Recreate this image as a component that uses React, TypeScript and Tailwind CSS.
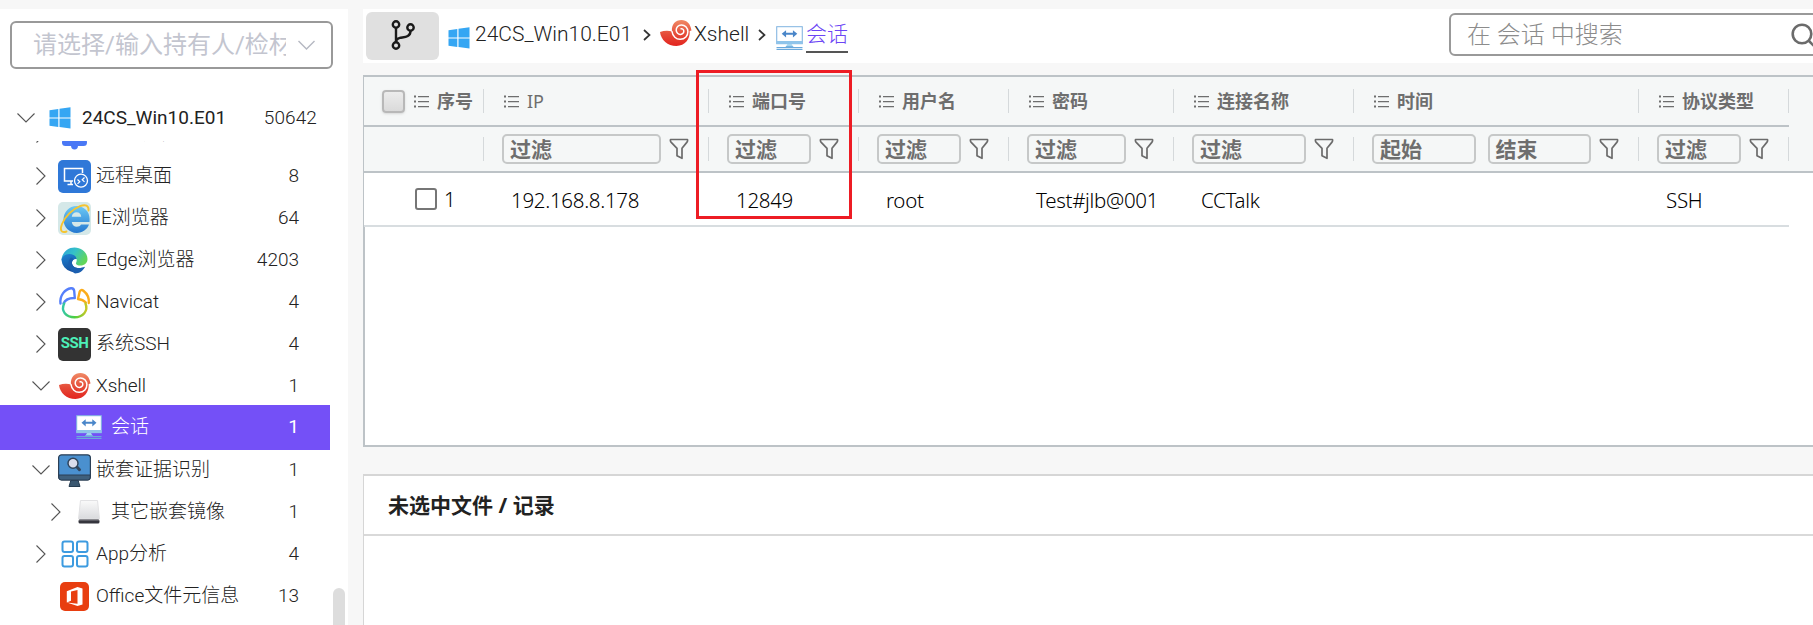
import React from "react";

const UI = "font-['Roboto','Noto_Sans_CJK_SC',sans-serif]";
const GRID = "font-['Noto_Sans','Noto_Sans_CJK_SC',sans-serif]";

function WindowsLogo() {
  return (
    <svg width="22" height="22" viewBox="0 0 22 22" className="shrink-0" fill="#35a6f3">
      <path d="M.5 3.3 9.3 2v8.4H.5zM10.5 1.8 21.5.3v10.1h-11zM.5 11.6h8.8V20L.5 18.7zM10.5 11.6h11v10L10.5 20.1z" />
    </svg>
  );
}

function SessionIcon({ size = 26 }: { size?: number }) {
  return (
    <svg width={size} height="25" viewBox="0 0 26 25" preserveAspectRatio="none" className="shrink-0">
      <rect x=".7" y=".7" width="24.6" height="17" fill="#fff" stroke="#7fb3e0" />
      <rect x=".5" y="15" width="25" height="3" fill="#8fc4ea" />
      <path d="M11 18h4l2 3.5H9z" fill="#a5d5f0" />
      <path d="M.5 21h8.500l1-.8h6l1 .8h8.500v1.200H.5zM.5 22.900h25v1.100H.5z" fill="#6aa9dc" />
      <path d="M5.500 7.800l4.200-3.600v2.600h6.600V4.200l4.200 3.600-4.200 3.600V8.800H9.700v2.600z" fill="#4a86c9" />
    </svg>
  );
}

function ShellIcon() {
  return (
    <svg width="33" height="28" viewBox="0 0 33 28" className="shrink-0">
      <defs>
        <linearGradient id="shell" x1="0" y1="0" x2="0" y2="1">
          <stop offset="0" stopColor="#f08a66" />
          <stop offset=".55" stopColor="#e54b38" />
          <stop offset="1" stopColor="#e3241f" />
        </linearGradient>
      </defs>
      <path
        d="M1 13c4-1.500 8.500-1.500 12-.6C12.200 5.500 16.500 1 22.500 1c5.200 0 9 3.500 10 10.500l-1.800.6c.6 8-4.700 14.900-13.200 14.900C8.500 27 2 21 1 13z"
        fill="url(#shell)"
      />
      <path
        d="M13 12.500c.6 4.700 4.200 8 8.300 7.800 4.600-.2 7.700-3.600 7.600-7.800-.1-3.900-3-6.700-6.500-6.600-3.100.1-5.300 2.400-5.200 5.200.1 2.600 2 4.500 4.400 4.300 2-.1 3.400-1.600 3.200-3.400-.1-1.500-1.300-2.500-2.700-2.200"
        fill="none"
        stroke="#fff"
        strokeWidth="1.500"
        strokeLinecap="round"
      />
    </svg>
  );
}

function RemoteIcon() {
  return (
    <svg width="33" height="33" viewBox="0 0 33 33">
      <rect width="33" height="33" rx="5" fill="#2f78d8" />
      <path d="M15 21H6.500V8.500h18V13M13 21v3.500M9.500 24.500H15" fill="none" stroke="#fff" strokeWidth="1.500" />
      <circle cx="23" cy="20.700" r="6.500" fill="#2f78d8" stroke="#fff" strokeWidth="1.300" />
      <path d="M19.500 19.500l2.300 2.200-2.300 2.200M26.500 17.500l-2.300 2.200 2.300 2.200" fill="none" stroke="#fff" strokeWidth="1.200" />
    </svg>
  );
}

function IEIcon() {
  return (
    <svg width="33" height="33" viewBox="0 0 33 33">
      <defs>
        <linearGradient id="ie" x1="0" y1="0" x2="0" y2="1">
          <stop offset="0" stopColor="#6cc9f5" />
          <stop offset="1" stopColor="#2478d0" />
        </linearGradient>
      </defs>
      <rect width="33" height="33" rx="5" fill="#d5e8e8" />
      <path
        d="M31.500 20H13.800c.3 3 2.400 4.800 5 4.800 2 0 3.400-.8 4.200-2.200h8c-1.800 5-6.500 8.400-12.200 8.400C11.200 31 5.500 25 5.500 17.600S11.200 4 18.600 4s13 5.500 13 13zM13.800 14.700h9.400c-.2-2.600-2-4.400-4.600-4.400s-4.500 1.800-4.800 4.400z"
        fill="url(#ie)"
      />
      <path
        d="M30.500 8.500C31 3.500 27.500 2 22 4.200 14.500 7.200 7 14.500 4 22c-2.300 5.800-1 9.500 4.500 7.500"
        fill="none"
        stroke="#f5c431"
        strokeWidth="1.900"
        strokeLinecap="round"
      />
    </svg>
  );
}

function EdgeIcon() {
  return (
    <svg width="27" height="27" viewBox="0 0 27 27">
      <defs>
        <linearGradient id="edgeTop" x1="0" y1="0" x2="1" y2=".5">
          <stop offset="0" stopColor="#2a9fdc" />
          <stop offset=".5" stopColor="#35c1c8" />
          <stop offset="1" stopColor="#62d65a" />
        </linearGradient>
        <linearGradient id="edgeLow" x1="0" y1="0" x2=".4" y2="1">
          <stop offset="0" stopColor="#1d84d4" />
          <stop offset="1" stopColor="#164e9c" />
        </linearGradient>
      </defs>
      <path d="M.5 13C1 5.500 6.800.5 13.500.5 21 .5 26.500 6 26.500 12c0 4-3 6.500-7 6.500-3 0-5-1-4.500-2.500.5-1.200 1-2.200.5-4z" fill="url(#edgeTop)" />
      <path d="M.5 13C1.500 7.500 8 5.500 12.500 8c2 1 3 2.500 3 4-2.500-.5-5 1.500-4.500 4.500.8 4.500 7 6 13 3.200A13 13 0 0 1 .5 13z" fill="url(#edgeLow)" />
      <path d="M9.500 11C6 15 7 23 14 26.400c4.500 0 8-2.400 10-6.700-6 2.800-12.200 1.300-13-3.200-.2-2 .5-3.300 1.700-4.100-.9-1.300-2-1.900-3.200-1.400z" fill="#1b5fb0" />
    </svg>
  );
}

function NavicatIcon() {
  return (
    <svg width="33" height="33" viewBox="0 0 33 33" fill="none" strokeWidth="2.400" strokeLinecap="round" strokeLinejoin="round">
      <defs>
        <linearGradient id="naviBody" x1="0" y1="0" x2="1" y2="0">
          <stop offset="0" stopColor="#35c7a5" />
          <stop offset=".5" stopColor="#4ccf3e" />
          <stop offset="1" stopColor="#c8c725" />
        </linearGradient>
      </defs>
      <path d="M2.500 17.500C1.500 9.500 7 3 13 2.200c2-.2 3 1 3.200 2.800l.6 7c-5.500-.2-9.500 1.500-11.300 5.500" stroke="#557ffb" />
      <path d="M20 13l1.600-7.100c.5-2 2.300-2.400 3.800-1.200 4 3.100 5.800 8 5.400 12.300M20 13c3.200.3 5.800 1.300 7.800 3.500" stroke="#fbac1b" />
      <path d="M6.200 17.500C2.500 25 8 31.200 16.500 31.200S30.500 25 27.500 17.500" stroke="url(#naviBody)" />
    </svg>
  );
}

function SshIcon() {
  return (
    <span className="flex h-[33px] w-[33px] justify-center rounded-[5px] bg-[#333] pt-[6px] text-[15px] leading-[18px] font-bold tracking-[-0.6px] text-[#4df0b8]">
      SSH
    </span>
  );
}

function EvidenceIcon() {
  return (
    <svg width="33" height="33" viewBox="0 0 33 33">
      <path d="M13 26h7l2 6.500H11z" fill="#3a5770" stroke="#253b50" />
      <rect x=".6" y=".8" width="31.800" height="25" rx="3" fill="#4a90cf" stroke="#2b3f55" strokeWidth="1.200" />
      <path d="M.8 21h31.400v2.500a2.500 2.500 0 0 1-2.500 2.500H3.300a2.500 2.500 0 0 1-2.500-2.500z" fill="#3f607c" stroke="#2b3f55" />
      <path d="M18.500 12.500l3 3.200" stroke="#31455c" strokeWidth="3" strokeLinecap="round" />
      <circle cx="15" cy="9.300" r="5" fill="#d9dcec" stroke="#31455c" strokeWidth="1.500" />
    </svg>
  );
}

function DiskIcon() {
  return (
    <svg width="22" height="24" viewBox="0 0 22 24">
      <defs>
        <linearGradient id="disk" x1="0" y1="0" x2="0" y2="1">
          <stop offset="0" stopColor="#fafafa" />
          <stop offset="1" stopColor="#d9dadd" />
        </linearGradient>
      </defs>
      <path d="M2.500.5h17l2 18.500H.5z" fill="url(#disk)" stroke="#e2e2e4" />
      <rect x=".5" y="19.500" width="21" height="4" rx="1.500" fill="#35353d" />
      <path d="M1 20h20" stroke="#85858b" />
    </svg>
  );
}

function AppsIcon() {
  return (
    <svg width="28" height="28" viewBox="0 0 28 28" fill="none" stroke="#3d9be0" strokeWidth="2">
      <rect x="1.500" y="1.500" width="10.500" height="10.500" rx="2" />
      <rect x="16" y="1.500" width="10.500" height="10.500" rx="2" />
      <rect x="1.500" y="16" width="10.500" height="10.500" rx="2" />
      <rect x="16" y="16" width="10.500" height="10.500" rx="2" />
    </svg>
  );
}

function OfficeIcon() {
  return (
    <svg width="29" height="29" viewBox="0 0 29 29">
      <rect width="29" height="29" rx="5" fill="#e83e10" />
      <path d="M6.800 9.200L17.500 5l5 1.500v16l-5 1.500-10.700-3.500 10.700 1.200V8l-6.500 1.600v9.200l-4.200 1.700z" fill="#fff" />
    </svg>
  );
}

function BellIcon() {
  return (
    <svg width="25" height="31" viewBox="0 0 25 31" fill="#4a78f5">
      <path d="M4 16V9a8.500 8 0 0 1 17 0v7l4 5H0z" />
      <rect y="20" width="25" height="7" rx="3.500" />
      <path d="M9 26.500h7a3.500 4 0 0 1-7 0z" />
    </svg>
  );
}

function Chevron({ open }: { open?: boolean }) {
  return (
    <svg width="18" height="18" viewBox="0 0 18 18" className="shrink-0" fill="none" stroke="#555" strokeWidth="1.100">
      <path d={open ? "M.5 4.500 9 13l8.500-8.500" : "M4.500.500 13 9l-8.500 8.500"} />
    </svg>
  );
}

type Node = {
  label: string;
  count: string;
  icon: React.ReactNode;
  level?: 1 | 2;
  state?: "open" | "closed";
  selected?: boolean;
};

const nodes: Node[] = [
  { label: "Toast通知", count: "", icon: <BellIcon />, state: "closed" },
  { label: "远程桌面", count: "8", icon: <RemoteIcon />, state: "closed" },
  { label: "IE浏览器", count: "64", icon: <IEIcon />, state: "closed" },
  { label: "Edge浏览器", count: "4203", icon: <EdgeIcon />, state: "closed" },
  { label: "Navicat", count: "4", icon: <NavicatIcon />, state: "closed" },
  { label: "系统SSH", count: "4", icon: <SshIcon />, state: "closed" },
  { label: "Xshell", count: "1", icon: <ShellIcon />, state: "open" },
  { label: "会话", count: "1", icon: <SessionIcon />, level: 2, selected: true },
  { label: "嵌套证据识别", count: "1", icon: <EvidenceIcon />, state: "open" },
  { label: "其它嵌套镜像", count: "1", icon: <DiskIcon />, level: 2, state: "closed" },
  { label: "App分析", count: "4", icon: <AppsIcon />, state: "closed" },
  { label: "Office文件元信息", count: "13", icon: <OfficeIcon /> },
];

function TreeRow({ node }: { node: Node }) {
  const tone = node.selected ? "-mt-[2px] -mb-[1px] h-[45px] bg-[#7450f7] text-white" : "h-[42px] text-[#222]";
  const indent = node.level === 2 ? "pl-[47px]" : "pl-[32px]";
  return (
    <div className={`flex w-[330px] shrink-0 items-center pr-[31px] text-[19px] ${indent} ${tone}`}>
      <span className="flex w-[18px] shrink-0">{node.state && <Chevron open={node.state === "open"} />}</span>
      <span className={`flex shrink-0 justify-center ${node.level === 2 ? "mr-[4px] ml-[6px] w-[36px]" : "mr-[5px] ml-[8px] w-[33px]"}`}>
        {node.icon}
      </span>
      <span className="grow font-light whitespace-nowrap">{node.label}</span>
      <span className={node.selected ? "" : "font-light"}>{node.count}</span>
    </div>
  );
}

function Sidebar() {
  return (
    <aside className={`flex w-[348px] shrink-0 flex-col bg-white ${UI}`}>
      <div className="mt-[12px] ml-[10px] flex h-[48px] w-[323px] shrink-0 items-center rounded-[6px] border-2 border-[#999] pl-[21px]">
        <span className="w-[253px] overflow-hidden text-[24px] whitespace-nowrap text-[#c3c5cf]">请选择/输入持有人/检材</span>
        <svg width="17" height="10" viewBox="0 0 17 10" className="ml-[12px]" fill="none" stroke="#b5b8c2" strokeWidth="1.400">
          <path d="M.5 1 8.500 9l8-8" />
        </svg>
      </div>
      <div className="mt-[26px] flex h-[46px] shrink-0 items-center pr-[31px] pl-[17px] text-[19px] text-[#222]">
        <Chevron open />
        <span className="mr-[11px] ml-[14px] flex">
          <WindowsLogo />
        </span>
        <span className="grow">24CS_Win10.E01</span>
        <span className="mt-px font-light tracking-[0.1px]">50642</span>
      </div>
      <div className="flex min-h-0 grow justify-between overflow-hidden">
        <div className="-mt-[28px] flex flex-col">
          {nodes.map((n) => (
            <TreeRow key={n.label} node={n} />
          ))}
        </div>
        <div className="mt-[447px] mr-[3px] h-[60px] w-[12px] rounded-full bg-[#ddd]" />
      </div>
    </aside>
  );
}

function CrumbArrow({ className }: { className: string }) {
  return (
    <svg width="8" height="12" viewBox="0 0 8 12" className={`shrink-0 ${className}`} fill="none" stroke="#333" strokeWidth="1.700">
      <path d="M1 1l5.500 5L1 11" />
    </svg>
  );
}

function TopBar() {
  return (
    <header className={`flex h-[54px] shrink-0 items-center bg-white pl-[3px] ${UI}`}>
      <button className="flex h-[48px] w-[73px] shrink-0 items-center justify-center rounded-[6px] bg-[#e0e0e0]">
        <svg width="26" height="32" viewBox="0 0 26 32" className="-mt-[2px]" fill="none" stroke="#1a1a1a" strokeWidth="2.400">
          <circle cx="6" cy="5.500" r="3.200" />
          <circle cx="20.500" cy="8.500" r="3.200" />
          <circle cx="6" cy="26.500" r="3.200" />
          <path d="M6 9v14M20.500 12c0 6.500-6.500 6-10.500 6.800-2.500.6-4 2-4 4.200" />
        </svg>
      </button>
      <div className="-mt-[2px] flex grow items-center text-[21px] text-[#222]">
        <span className="mt-[5px] mr-[5px] ml-[9px] flex">
          <WindowsLogo />
        </span>
        <span className="w-[158px] font-light whitespace-nowrap">24CS_Win10.E01</span>
        <CrumbArrow className="mr-[8px] ml-[10px]" />
        <span className="-mt-[5px] flex">
          <ShellIcon />
        </span>
        <span className="ml-[2px] w-[56px] font-light">Xshell</span>
        <CrumbArrow className="mr-[10px] ml-[8px]" />
        <span className="mt-[6px] flex">
          <SessionIcon size={27} />
        </span>
        <span className="mt-[2px] ml-[3px] flex h-[34px] items-center border-b-2 border-[#555] text-[21px] font-light text-[#6c45f5]">会话</span>
      </div>
      <div className="-mt-[3px] -mr-[20px] flex h-[43px] w-[384px] shrink-0 items-center rounded-[6px] border-2 border-[#999] pl-[16px]">
        <span className="grow text-[24px] font-light text-[#8c8c8c]">在 会话 中搜索</span>
        <svg width="28" height="28" viewBox="0 0 28 28" className="mt-[3px] mr-[13px]" fill="none" stroke="#6b6b6b" strokeWidth="2.600">
          <circle cx="12" cy="12" r="9.300" />
          <path d="M18.500 18.500l8 8" />
        </svg>
      </div>
    </header>
  );
}

function ListIcon() {
  return (
    <svg width="15" height="13" viewBox="0 0 15 13" className="shrink-0" fill="#6e6e6e">
      <path d="M0 .5h2v2H0zM4 1h11v1.200H4zM0 5.500h2v2H0zM4 6h11v1.200H4zM0 10.500h2v2H0zM4 11h11v1.200H4z" />
    </svg>
  );
}

function Funnel() {
  return (
    <svg width="20" height="22" viewBox="0 0 20 22" className="shrink-0" fill="none" stroke="#6b6b6b" strokeWidth="1.700" strokeLinejoin="round">
      <path d="M1.500 1.500h17c.4 1.200.2 1.800-.5 2.600l-5 6.200v10l-5-2.500v-7.500L2 4.100c-.7-.8-.9-1.400-.5-2.600z" />
    </svg>
  );
}

type Column = { title: string; width: string; filters: string[]; value: string };

const columns: Column[] = [
  { title: "IP", width: "w-[225px]", filters: ["过滤"], value: "192.168.8.178" },
  { title: "端口号", width: "w-[150px]", filters: ["过滤"], value: "12849" },
  { title: "用户名", width: "w-[150px]", filters: ["过滤"], value: "root" },
  { title: "密码", width: "w-[165px]", filters: ["过滤"], value: "Test#jlb@001" },
  { title: "连接名称", width: "w-[180px]", filters: ["过滤"], value: "CCTalk" },
  { title: "时间", width: "w-[285px]", filters: ["起始", "结束"], value: "" },
  { title: "协议类型", width: "w-[150px]", filters: ["过滤"], value: "SSH" },
];

function Separator() {
  return <span className="h-[24px] w-px shrink-0 bg-[#d5d9db]" />;
}

function DataGrid() {
  return (
    <section className={`flex h-[372px] shrink-0 flex-col border-y-2 border-l border-[#bdc3c7] bg-white ${GRID}`}>
      <div className="border-b-2 border-[#bdc3c7] bg-[#f5f7f7]">
        <div className="flex h-[50px] w-[1425px] items-center border-b-2 border-[#bdc3c7] text-[18px] font-bold text-[#6e6e6e]">
          <div className="flex w-[120px] shrink-0 items-center pl-[18px]">
            <span className="h-[23px] w-[23px] shrink-0 rounded-[4px] border-2 border-[#b8b8b8] bg-linear-to-b from-[#ececec] to-[#dadada] shadow-sm" />
            <span className="mr-[8px] ml-[9px] flex">
              <ListIcon />
            </span>
            <span className="grow whitespace-nowrap">序号</span>
            <Separator />
          </div>
          {columns.map((c) => (
            <div key={c.title} className={`flex shrink-0 items-center pl-[20px] ${c.width}`}>
              <ListIcon />
              <span className={`ml-[8px] grow ${c.title === "IP" ? "font-normal" : "font-bold"}`}>{c.title}</span>
              <Separator />
            </div>
          ))}
        </div>
        <div className="flex h-[44px] w-[1425px] items-center">
          <div className="flex w-[120px] shrink-0 justify-end">
            <Separator />
          </div>
          {columns.map((c) => (
            <div key={c.title} className={`flex shrink-0 items-center pl-[18px] ${c.width}`}>
              <div className="flex grow gap-[12px]">
                {c.filters.map((f) => (
                  <span
                    key={f}
                    className="flex h-[30px] flex-1 items-center rounded-[5px] border-2 border-[#c6c8c8] pt-[2px] pl-[6px] text-[21px] font-bold text-[#6e6e6e]"
                  >
                    {f}
                  </span>
                ))}
              </div>
              <span className="mr-[19px] ml-[8px] flex">
                <Funnel />
              </span>
              <Separator />
            </div>
          ))}
        </div>
      </div>
      <div className="flex h-[54px] w-[1425px] shrink-0 items-center border-b-2 border-[#d8dde0] text-[20.5px] font-light text-black">
        <div className="flex w-[120px] shrink-0 items-center pl-[51px]">
          <span className="mr-[7px] h-[22px] w-[22px] rounded-[3px] border-2 border-[#767676] bg-white" />
          1
        </div>
        {columns.map((c) => (
          <div key={c.title} className={`shrink-0 pt-[2px] pl-[27px] tracking-[-0.3px] ${c.width}`}>
            {c.value}
          </div>
        ))}
      </div>
      <div className="grow border-l border-[#bdc3c7]" />
    </section>
  );
}

export default function App() {
  return (
    <div className="relative flex h-[625px] w-[1813px] overflow-hidden bg-[#f7f7f7] pt-[9px]">
      <Sidebar />
      <main className="ml-[15px] flex min-w-0 grow flex-col">
        <TopBar />
        <div className="h-[12px] shrink-0" />
        <DataGrid />
        <section className={`mt-[27px] flex grow flex-col border-t-2 border-l border-[#d6d6d6] bg-white ${GRID}`}>
          <h2 className="flex h-[60px] items-center border-b-2 border-[#d9d9d9] pt-[2px] pl-[24px] text-[21px] font-bold text-[#222]">
            未选中文件 / 记录
          </h2>
        </section>
      </main>
      <div className="absolute top-[70px] left-[696px] h-[149px] w-[156px] border-3 border-[#ed1c24]" />
    </div>
  );
}
